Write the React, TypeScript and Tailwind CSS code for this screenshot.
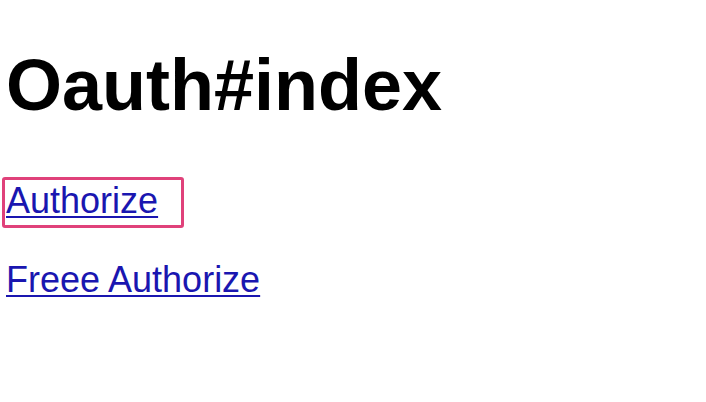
import React from "react";

export default function App() {
  return (
    <div className="min-h-[402px] w-[706px] bg-white pl-[6px] font-['Liberation_Sans',Arial,sans-serif]">
      <h1 className="pt-[45px] text-[72px] font-bold leading-[80px] text-black">Oauth#index</h1>
      <p className="mt-[56px] text-[36px] leading-[40px]">
        <span className="relative inline-block">
          <a href="#" className="text-[#1a16b0] underline decoration-[2px] underline-offset-[3px]">
            Authorize
          </a>
          <span className="pointer-events-none absolute left-[-4px] top-[-4px] h-[51px] w-[182px] rounded-[3px] border-[3px] border-[#e0417a]" />
        </span>
      </p>
      <p className="mt-[39px] text-[36px] leading-[40px]">
        <a href="#" className="text-[#1a16b0] underline decoration-[2px] underline-offset-[3px]">
          Freee Authorize
        </a>
      </p>
    </div>
  );
}
